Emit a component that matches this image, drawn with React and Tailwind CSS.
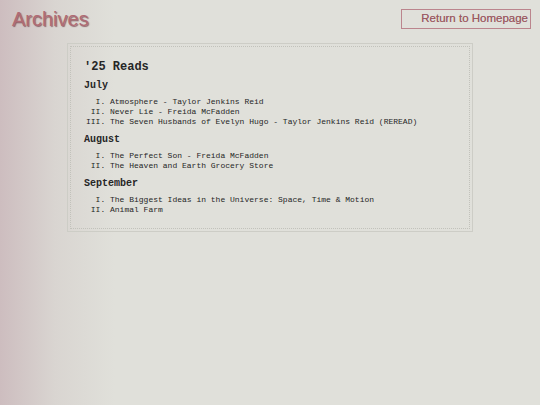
import React from "react";

const reads = [
  {
    month: "July",
    books: [
      "Atmosphere - Taylor Jenkins Reid",
      "Never Lie - Freida McFadden",
      "The Seven Husbands of Evelyn Hugo - Taylor Jenkins Reid (REREAD)",
    ],
  },
  {
    month: "August",
    books: ["The Perfect Son - Freida McFadden", "The Heaven and Earth Grocery Store"],
  },
  {
    month: "September",
    books: ["The Biggest Ideas in the Universe: Space, Time & Motion", "Animal Farm"],
  },
];

const App = () => {
  return (
    <div className="min-h-[405px] w-full bg-[linear-gradient(to_right,#cdbdbf_0px,#d9d5d1_55px,#e0e0da_115px)] font-['Courier_New','Liberation_Mono',monospace]">
      {/* Header */}
      <header className="flex items-start justify-between pl-[12px] pr-[9px] pt-[7px]">
        <h1 className="font-['Liberation_Sans',Arial,sans-serif] text-[20px] leading-[24px] text-[#b06b74] [text-shadow:1px_1px_1px_rgba(90,30,40,0.6)]">
          Archives
        </h1>
        <a
          href="#"
          className="mt-[2px] flex h-[20px] w-[130px] items-center justify-end border border-[#bb858d] pr-[2px] font-['Liberation_Sans',Arial,sans-serif] text-[11.5px] text-[#9e5a63] [text-shadow:0_0_0.4px_rgba(120,50,60,0.6)]"
        >
          Return to Homepage
        </a>
      </header>

      {/* Reading log card */}
      <div className="ml-[67px] mt-[12px] w-[406px] border border-[#cdcdc6] p-[2px]">
        <div className="border border-dotted border-[#c2c2bb] px-[13px] pb-[13px] pt-[12px] text-[#262626]">
          <h2 className="text-[12px] font-bold leading-[16px]">'25 Reads</h2>
          {reads.map((r, i) => (
            <section key={r.month} className={i === 0 ? "mt-[4px]" : "mt-[6px]"}>
              <h3 className="text-[10px] font-bold leading-[14px]">{r.month}</h3>
              <ol className="mt-[4px] list-[upper-roman] pl-[26px] text-[8px] leading-[10px]">
                {r.books.map((b) => (
                  <li key={b}>{b}</li>
                ))}
              </ol>
            </section>
          ))}
        </div>
      </div>
    </div>
  );
};

export default App;
